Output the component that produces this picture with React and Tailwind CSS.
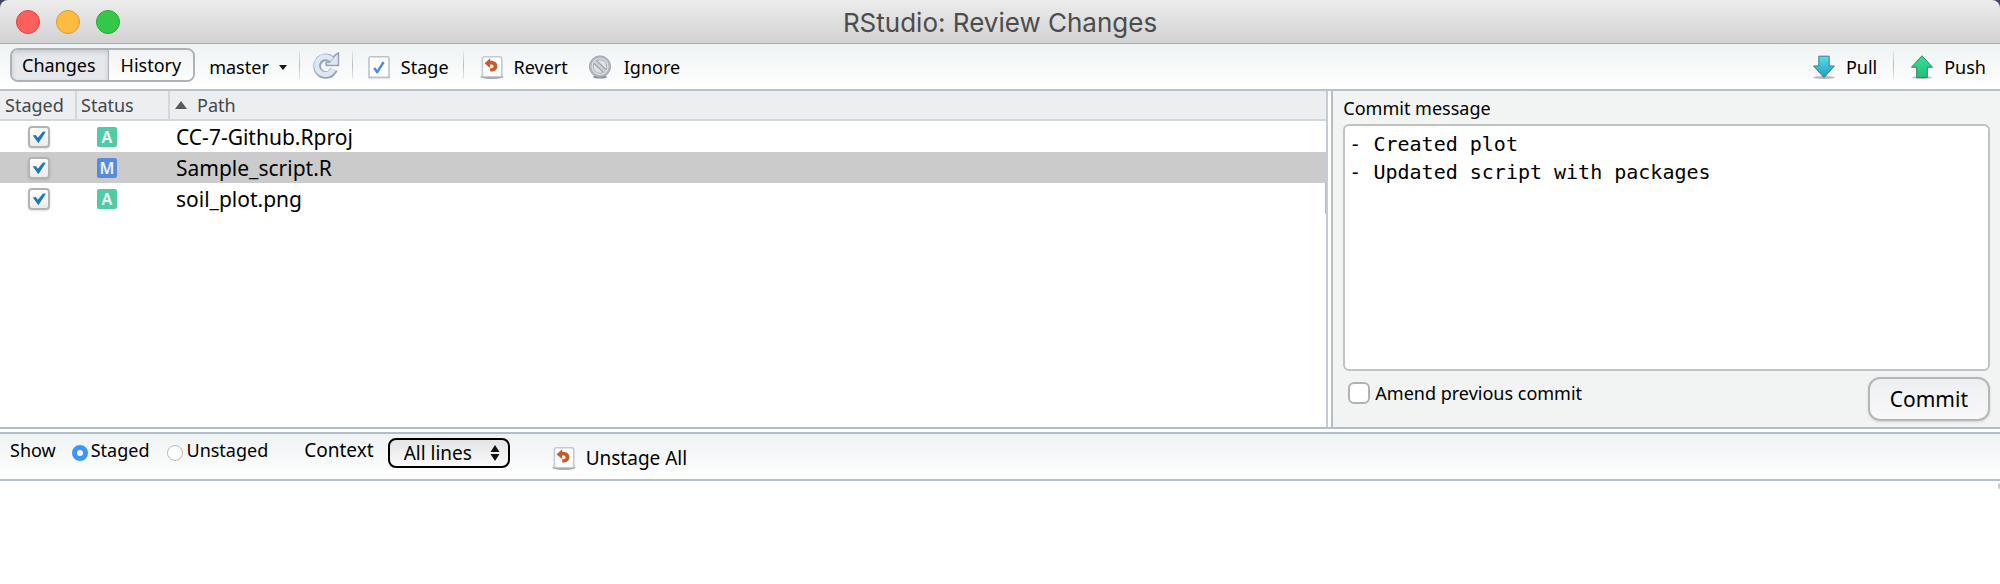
import { useState } from "react";

const files = [
  { path: "CC-7-Github.Rproj", status: "A" },
  { path: "Sample_script.R", status: "M" },
  { path: "soil_plot.png", status: "A" },
];

function Separator() {
  return <span className="h-7 w-px bg-linear-to-b from-gray-200 via-[#b9bdc0] to-gray-200" />;
}

function RefreshIcon() {
  return (
    <svg className="size-7" viewBox="0 0 28 28" aria-hidden="true">
      <ellipse cx="14" cy="26" rx="8" ry="1.5" fill="#c3c8d0" opacity=".6" />
      <path d="M19.500 8.400A8.800 8.800 0 1 0 22 18.600" fill="none" stroke="#97a3b5" strokeWidth="7.600" />
      <path d="M26.400 1.800v12.600H14.200v-3.200h3.600l2-2.600 3.600-4.800z" fill="#dce6f3" stroke="#97a3b5" strokeWidth="1.600" strokeLinejoin="round" />
      <path d="M19.800 8.600A8.800 8.800 0 1 0 21.400 18.200" fill="none" stroke="#dde7f3" strokeWidth="5" />
      <path d="M25.400 4v9.400h-9l3.600-3.800z" fill="#dde7f3" />
    </svg>
  );
}

function StageIcon() {
  return (
    <svg className="size-6" viewBox="0 0 24 24" aria-hidden="true">
      <path d="M1 22.500h22" stroke="#c4c9cd" strokeWidth="2" />
      <rect x="2" y="1.800" width="20" height="20.400" rx="1.500" fill="#fff" stroke="#bcc4ca" strokeWidth="1.600" />
      <path d="M7.200 13l3 4.200L16.600 7" fill="none" stroke="#4a90e2" strokeWidth="2.500" strokeLinejoin="round" />
    </svg>
  );
}

function RevertIcon() {
  return (
    <svg className="size-6" viewBox="0 0 24 24" aria-hidden="true">
      <ellipse cx="12" cy="21.800" rx="11.500" ry="2" fill="#8d9399" />
      <rect x="2.400" y="1.800" width="19.400" height="20" rx="2" fill="#fff" stroke="#c4cad0" strokeWidth="1.600" />
      <path d="M4.600 8.200l5.600-5v2.600c4.800 0 7.200 2.200 7.200 5.400 0 3.600-2.800 5.400-7.200 5.400v-3.400c2.200 0 3.400-.6 3.400-2s-1.200-1.800-3.400-1.800v3.800z" fill="#c8592a" />
    </svg>
  );
}

function IgnoreIcon() {
  return (
    <svg className="size-6" viewBox="0 0 24 24" aria-hidden="true">
      <ellipse cx="12" cy="22" rx="7" ry="1.600" fill="#8b929b" />
      <circle cx="12" cy="11.500" r="10.600" fill="#b4b9c0" stroke="#a0a6ae" />
      <circle cx="12" cy="11.500" r="7.800" fill="#d9dce0" stroke="#dfe2e6" strokeWidth="1.500" />
      <circle cx="12" cy="11.500" r="6.800" fill="#dfe2e6" stroke="#a7adb5" />
      <path d="M7.200 7l9.600 9" stroke="#979ea8" strokeWidth="5" />
      <path d="M6.800 6.600l10.400 9.800" stroke="#cdd1d6" strokeWidth="2.800" />
    </svg>
  );
}

function PullIcon() {
  return (
    <svg className="size-6" viewBox="0 0 24 24" aria-hidden="true">
      <defs>
        <linearGradient id="pull" x2="0" y2="1">
          <stop offset="0" stopColor="#52e0ee" />
          <stop offset="1" stopColor="#2699b8" />
        </linearGradient>
      </defs>
      <ellipse cx="12" cy="22.500" rx="11" ry="1.500" fill="#b9b7c0" />
      <path d="M6.800 1.200h10.400v9.800h5.300L12 22.600 1.500 11h5.300z" fill="url(#pull)" stroke="#3d7f92" strokeLinejoin="round" />
    </svg>
  );
}

function PushIcon() {
  return (
    <svg className="size-6" viewBox="0 0 24 24" aria-hidden="true">
      <defs>
        <linearGradient id="push" x2="0" y2="1">
          <stop offset="0" stopColor="#2ee695" />
          <stop offset="1" stopColor="#28bb7a" />
        </linearGradient>
      </defs>
      <ellipse cx="12" cy="22.500" rx="10" ry="1.500" fill="#c0bfc6" />
      <path d="M12 .800L22.500 12.200h-5.200v10.400H6.700V12.200H1.500z" fill="url(#push)" stroke="#33835f" strokeLinejoin="round" />
    </svg>
  );
}

function StagedCheckbox({ path }) {
  return (
    <span className="mx-auto grid size-[22px] place-items-center *:[grid-area:1/1]">
      <input
        type="checkbox"
        defaultChecked
        aria-label={`Stage ${path}`}
        className="peer size-[22px] appearance-none rounded-sm border-2 border-[#b3b3b3] bg-linear-to-b from-white to-[#ebebeb] shadow-sm"
      />
      <svg className="pointer-events-none invisible size-4 peer-checked:visible" viewBox="0 0 16 16" aria-hidden="true">
        <path d="M1.800 6.600l3-.6 2 2.800L12 2.600l2.800.2L7.400 14.200z" fill="#1b78bd" />
      </svg>
    </span>
  );
}

function StatusBadge({ status }) {
  const color = status === "A" ? "bg-[#50cba5]" : "bg-[#5a8bdb]";
  return (
    <span className={`grid size-5 place-items-center rounded-xs text-base leading-5 font-semibold text-white/90 ${color}`}>
      {status}
    </span>
  );
}

export default function App() {
  const [tab, setTab] = useState("Changes");
  const [selected, setSelected] = useState("Sample_script.R");

  return (
    <div className="flex min-h-screen flex-col bg-white font-['Noto_Sans','Open_Sans',sans-serif] text-lg leading-6 text-black">
      <div className="bg-[#3e4562]">
        <header className="grid h-11 grid-cols-[1fr_auto_1fr] items-center rounded-t-lg border-b border-[#a9a9a9] bg-linear-to-b from-[#ececec] to-[#d2d2d2] px-4">
          <div className="flex gap-4">
            <button aria-label="Close" className="size-6 rounded-full border border-[#e2443f] bg-[#fc605c]" />
            <button aria-label="Minimize" className="size-6 rounded-full border border-[#de9b35] bg-[#fdbc40]" />
            <button aria-label="Zoom" className="size-6 rounded-full border border-[#26a934] bg-[#34c84a]" />
          </div>
          <h1 className="pt-[2px] font-['Inter','Roboto',sans-serif] text-[26px] text-[#4c4c4c]">RStudio: Review Changes</h1>
        </header>
      </div>

      <nav className="flex items-center border-b-2 border-[#b9c1c9] bg-linear-to-b from-[#eff3f4] to-white px-[10px] pt-1 pb-[7px]">
        <div className="flex overflow-hidden rounded-lg border-2 border-[#afb2b5]">
          {["Changes", "History"].map((name) => (
            <button
              key={name}
              onClick={() => setTab(name)}
              className={`h-[30px] pr-3 pl-[10px] last:border-l last:border-[#afb2b5] last:pl-3 ${
                tab === name ? "bg-[#e6e8ec] shadow-[inset_0_2px_5px_#c5c8cc]" : "bg-linear-to-b from-[#f1f2f4] to-white"
              }`}
            >
              {name}
            </button>
          ))}
        </div>
        <button className="ml-[14px] flex items-center gap-[10px] pt-1">
          master
          <svg className="h-[5px] w-2" viewBox="0 0 8 5" aria-hidden="true">
            <path d="M0 0h8L4 5z" fill="#111" />
          </svg>
        </button>
        <div className="ml-3 flex items-center gap-3">
          <Separator />
          <button aria-label="Refresh"><RefreshIcon /></button>
          <Separator />
        </div>
        <button className="ml-[14px] flex items-center gap-[10px] pt-1"><StageIcon />Stage</button>
        <div className="mr-4 ml-[14px] flex"><Separator /></div>
        <button className="flex items-center gap-[10px] pt-1"><RevertIcon />Revert</button>
        <button className="ml-5 flex items-center gap-3 pt-1"><IgnoreIcon />Ignore</button>
        <button className="ml-auto flex items-center gap-[10px] pt-1"><PullIcon />Pull</button>
        <div className="mr-4 ml-4 flex"><Separator /></div>
        <button className="mr-1 flex items-center gap-[10px] pt-1"><PushIcon />Push</button>
      </nav>

      <main className="flex border-b-2 border-[#b4bec7]">
        <section className="flex min-w-0 flex-1 border-r-2 border-[#b4bec7] pr-[3px]">
          <div className="min-w-0 flex-1 border-r-2 border-[#c4cbd2]">
            <table className="w-full table-fixed border-separate border-spacing-0 text-left">
              <thead>
                <tr className="bg-[#edeef0] text-[#41484d] *:border-b-2 *:border-[#d5d8da]">
                  <th className="h-[30px] w-[77px] border-r-2 pl-[5px] font-normal">Staged</th>
                  <th className="w-[93px] border-r-2 pl-1 font-normal">Status</th>
                  <th className="pl-[5px] font-normal">
                    <span className="flex items-center gap-[10px]">
                      <svg className="h-2 w-3" viewBox="0 0 12 8" aria-hidden="true">
                        <path d="M6 0l6 8H0z" fill="#555c61" />
                      </svg>
                      Path
                    </span>
                  </th>
                </tr>
              </thead>
              <tbody>
                {files.map(({ path, status }) => (
                  <tr key={path} onClick={() => setSelected(path)} className={selected === path ? "bg-[#cbcbcb]" : "bg-white"}>
                    <td className="h-[31px]"><StagedCheckbox path={path} /></td>
                    <td className="pl-5"><StatusBadge status={status} /></td>
                    <td className={`pl-[6px] text-[21px] ${path === "soil_plot.png" ? "border-r border-[#9cc4ee]" : ""}`}>{path}</td>
                  </tr>
                ))}
              </tbody>
            </table>
          </div>
        </section>

        <section className="flex w-1/3 flex-col bg-[#f2f4f4] px-[10px] pt-[5px] pb-[6px]">
          <label htmlFor="message">Commit message</label>
          <textarea
            id="message"
            spellCheck={false}
            defaultValue={"- Created plot\n- Updated script with packages"}
            className="mt-1 h-[247px] resize-none rounded-md border-2 border-[#c0c3c3] bg-white px-1 py-1 font-['DejaVu_Sans_Mono','Liberation_Mono',monospace] text-xl leading-7 outline-none"
          />
          <div className="mt-[6px] flex items-start justify-between">
            <label className="flex items-center gap-[5px] pt-1 pl-[5px]">
              <input type="checkbox" className="size-[22px] appearance-none rounded-md border-2 border-[#b2b2b2] bg-white checked:bg-[#3b99fc]" />
              Amend previous commit
            </label>
            <button className="h-11 rounded-xl border-2 border-[#b4b6b8] bg-linear-to-b from-[#eeeff2] to-[#f8f8f9] px-5 text-[21px] shadow-sm">
              Commit
            </button>
          </div>
        </section>
      </main>

      <section className="mt-[3px] flex items-start border-y-2 border-[#b4bec7] bg-linear-to-b from-[#eff3f4] to-white px-[10px] pt-1 pb-[9px]">
        <fieldset className="flex">
          <legend className="float-left mr-4">Show</legend>
          <label className="mr-[18px] flex items-center gap-[3px]">
            <input
              type="radio"
              name="show"
              defaultChecked
              className="mt-[6px] size-4 appearance-none rounded-full border border-[#b8b8b8] bg-white checked:border-[5px] checked:border-[#3b95fb]"
            />
            Staged
          </label>
          <label className="flex items-center gap-[3px]">
            <input
              type="radio"
              name="show"
              className="mt-[6px] size-4 appearance-none rounded-full border border-[#b8b8b8] bg-white checked:border-[5px] checked:border-[#3b95fb]"
            />
            Unstaged
          </label>
        </fieldset>
        <label htmlFor="context" className="ml-9 text-[19px]">Context</label>
        <div className="ml-[14px] grid items-center *:[grid-area:1/1]">
          <select
            id="context"
            className="h-[30px] w-[122px] appearance-none rounded-lg border-2 border-black bg-linear-to-b from-[#e4e4e4] to-[#fafafa] pl-[14px] text-[19px]"
          >
            <option>All lines</option>
            <option>5 lines</option>
            <option>10 lines</option>
          </select>
          <svg className="pointer-events-none mr-[10px] h-4 w-[10px] justify-self-end" viewBox="0 0 10 16" aria-hidden="true">
            <path d="M5 0l4.500 7h-9zM5 16L.500 9h9z" fill="#111" />
          </svg>
        </div>
        <button className="ml-[42px] flex items-center gap-[10px] pt-2 text-[19px]"><RevertIcon />Unstage All</button>
      </section>
      <div className="flex flex-1 justify-end bg-white pt-[2px]">
        <span className="h-[6px] w-[2px] rounded-l-full bg-[#c9c9c9]" />
      </div>
    </div>
  );
}
